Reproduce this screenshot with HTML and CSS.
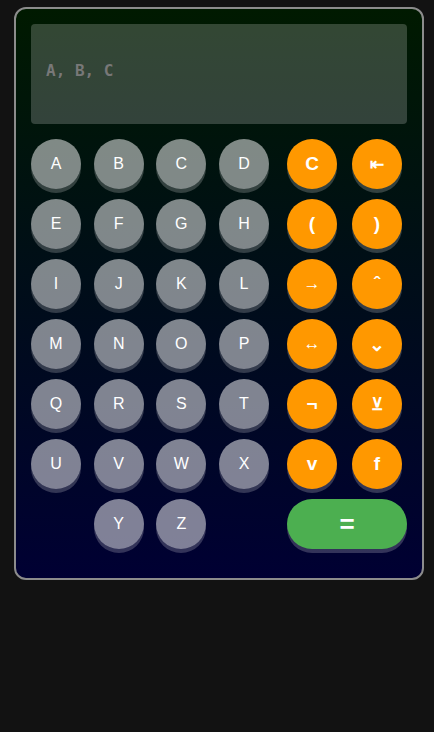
FILE: index.html
```html
<!DOCTYPE html>
<html>
<head>
<meta charset="utf-8">
<link rel="stylesheet" href="styles.css">
</head>
<body>
<div class="calc">
  <div class="display">A, B, C</div>
  <div class="keys">
    <div class="letters">
      <button class="key">A</button><button class="key">B</button><button class="key">C</button><button class="key">D</button>
      <button class="key">E</button><button class="key">F</button><button class="key">G</button><button class="key">H</button>
      <button class="key">I</button><button class="key">J</button><button class="key">K</button><button class="key">L</button>
      <button class="key">M</button><button class="key">N</button><button class="key">O</button><button class="key">P</button>
      <button class="key">Q</button><button class="key">R</button><button class="key">S</button><button class="key">T</button>
      <button class="key">U</button><button class="key">V</button><button class="key">W</button><button class="key">X</button>
      <button class="key col2">Y</button><button class="key">Z</button>
    </div>
    <div class="ops">
      <button class="op">C</button><button class="op small">⇤</button>
      <button class="op">(</button><button class="op">)</button>
      <button class="op thin">→</button><button class="op">ˆ</button>
      <button class="op thin">↔</button><button class="op">⌄</button>
      <button class="op">¬</button><button class="op small">⊻</button>
      <button class="op">v</button><button class="op">f</button>
      <button class="equal">=</button>
    </div>
  </div>
</div>
</body>
</html>
```
FILE: styles.css
```css
html, body {
  margin: 0;
  padding: 0;
  background: #121212;
}
body {
  padding: 7px 0 0 14px;
}
.calc {
  width: 376px;
  border: 2px solid #8c8c8c;
  border-radius: 12px;
  padding: 15px 15px 29px;
  background: linear-gradient(to bottom, #001a00, #000033);
}
.display {
  height: 93px;
  padding: 0 15px 7px;
  display: flex;
  align-items: center;
  background: rgba(255, 255, 255, 0.2);
  border-radius: 4px;
  font-family: "DejaVu Sans Mono", monospace;
  font-weight: bold;
  font-size: 16px;
  color: #787878;
}
.keys {
  display: flex;
  gap: 18px;
  margin-top: 15px;
}
.letters {
  width: 238px;
  display: grid;
  grid-template-columns: repeat(4, 50px);
  justify-content: space-between;
  grid-auto-rows: 50px;
  row-gap: 10px;
}
.ops {
  width: 120px;
  display: grid;
  grid-template-columns: 1fr 1fr;
  grid-auto-rows: 50px;
  column-gap: 10px;
  row-gap: 10px;
}
button {
  border: none;
  padding: 0;
  margin: 0;
  color: #fff;
  font-family: "Liberation Sans", Arial, sans-serif;
  box-shadow: 0 4px 0 rgba(255, 255, 255, 0.2);
}
.key {
  width: 50px;
  height: 50px;
  border-radius: 50%;
  background: rgba(255, 255, 255, 0.5);
  font-size: 16px;
}
.col2 {
  grid-column: 2;
}
.op {
  width: 50px;
  height: 50px;
  border-radius: 50%;
  background: #ff9800;
  font-size: 19px;
  font-weight: bold;
}
.op.thin {
  font-weight: normal;
  font-size: 17px;
}
.op.small {
  font-size: 17px;
}
.equal {
  grid-column: 1 / span 2;
  height: 50px;
  border-radius: 25px;
  background: #4caf50;
  font-size: 26px;
  font-weight: bold;
}
```
